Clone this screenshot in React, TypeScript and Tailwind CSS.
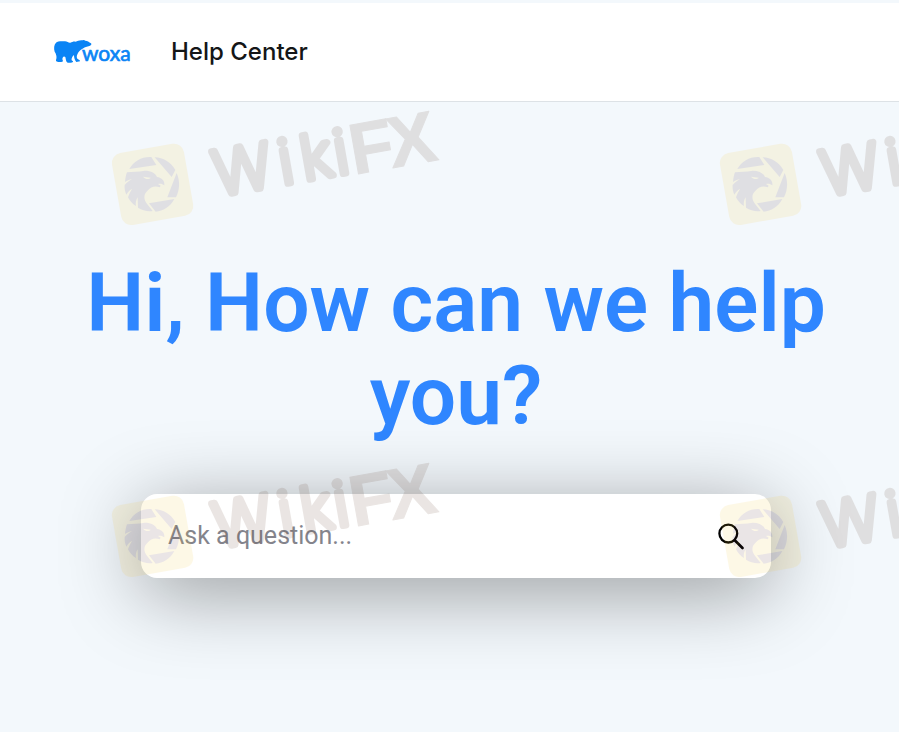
import React from "react";

function WoxaLogo() {
  return (
    <svg viewBox="0 0 285 135" className="h-[45px] w-[95px]" role="img" aria-label="woxa">
      <path
        fill="#0a84f5"
        d="M33 38 C38 33 50 33 60 34 C67 35 71 39 76 38 C82 36 86 33 92 35 C97 33 104 30 112 31 L117 30 L121 32 C127 32 132 36 138 40 C141 43 138 47 133 48 C126 50 119 51 115 55 C108 59 103 63 99 69 C95 76 94 81 97 86 C102 89 106 91 105 94 L94 96 C89 90 87 83 87 75 C81 80 79 86 80 91 C86 94 86 98 78 98 L68 98 C62 95 63 88 61 81 C58 78 55 79 53 83 C51 87 53 90 54 93 C53 97 46 96 40 96 C32 95 32 91 34 87 C36 79 33 71 29 65 C26 55 27 44 33 38 Z"
      />
      <text
        x="111"
        y="93"
        fill="#0a84f5"
        stroke="#0a84f5"
        strokeWidth="2"
        fontFamily="Lato, 'Liberation Sans', sans-serif"
        fontWeight="400"
        fontSize="63"
      >
        woxa
      </text>
    </svg>
  );
}

function Watermark({ x, y }: { x: number; y: number }) {
  return (
    <g transform={`translate(${x} ${y})`} opacity="0.12">
      <g transform="translate(152 184) rotate(-10)">
        <rect x="-36" y="-36" width="73" height="73" rx="10" fill="#f4c83a" />
      </g>
      <g transform="translate(105 138) scale(0.3333)">
        <path
          fill="#5a3438"
          d="M73 93 C86 69 112 55 139 57 L154 81 Z M149 58 C175 59 197 72 211 96 L200 117 Z M215 105 C226 130 224 156 213 178 L187 178 Z M132 196 L208 183 C196 207 174 219 152 221 Z"
        />
        <path
          fill="#5a3438"
          d="M66 103 C82 100 99 103 119 98 C139 98 152 106 156 117 C170 119 180 128 178 142 C173 137 165 136 159 138 L167 143 L164 148 C150 142 137 147 129 157 C114 170 116 185 127 199 L143 219 C129 222 112 217 99 209 L98 178 C93 186 91 195 93 204 C82 198 74 188 69 178 C72 169 76 161 81 153 C73 157 68 163 64 170 C60 161 58 151 59 141 C65 134 73 128 81 124 C73 125 66 128 60 132 C61 121 63 111 66 103 Z"
        />
        <path d="M114 116 L137 119 C131 126 121 124 114 116 Z" fill="#f4c83a" />
      </g>
      <g transform="translate(216 199) rotate(-10)" fill="#5a3420" stroke="#5a3420" strokeLinejoin="round">
        <text
          x="31 75 106 131"
          y="-3"
          textAnchor="middle"
          fontFamily="Inter, 'Liberation Sans', sans-serif"
          fontWeight="200"
          fontSize="61"
          strokeWidth="7"
        >
          Wiki
        </text>
        <text
          x="140 179"
          y="0"
          fontFamily="'Liberation Sans', Arial, sans-serif"
          fontWeight="700"
          fontSize="72"
          strokeWidth="1"
        >
          FX
        </text>
      </g>
    </g>
  );
}

function WatermarkLayer() {
  return (
    <svg className="pointer-events-none absolute inset-0 h-full w-full" aria-hidden="true">
      <Watermark x={0} y={0} />
      <Watermark x={608} y={0} />
      <Watermark x={0} y={352} />
      <Watermark x={608} y={352} />
    </svg>
  );
}

function SearchIcon() {
  return (
    <svg viewBox="0 0 28 28" className="size-7" fill="none" stroke="#000" strokeWidth="2.3" strokeLinecap="round">
      <circle cx="11.3" cy="11.6" r="8.9" />
      <path d="M18 18.5 L25.5 26" strokeWidth="2.7" />
    </svg>
  );
}

export default function App() {
  return (
    <div className="relative overflow-hidden bg-white pb-3 font-[Roboto,'Liberation_Sans',sans-serif]">
      <header className="flex h-[102px] items-center gap-[31px] border-t-[3px] border-b border-t-[#f3f8fc] border-b-[#dde2e6] bg-white pl-[45px]">
        <a href="#home">
          <WoxaLogo />
        </a>
        <a href="#help" className="font-[Inter,'Liberation_Sans',sans-serif] text-2xl font-medium text-[#141617]">
          Help Center
        </a>
      </header>
      <main className="flex h-[630px] flex-col items-center bg-[#f3f8fc] pt-[155px] pl-[13px]">
        <h1 className="max-w-[800px] text-center text-[82px] leading-[93px] font-semibold text-[#2f86ff]">
          Hi, How can we help you?
        </h1>
        <form
          className="mt-[51px] flex h-[84px] w-[630px] max-w-full items-center rounded-2xl bg-white pr-[26px] pl-[27px] shadow-[0_14px_80px_rgba(0,0,0,0.38)]"
          onSubmit={(e) => e.preventDefault()}
        >
          <input
            type="text"
            aria-label="Ask a question"
            placeholder="Ask a question..."
            className="min-w-0 flex-1 text-[25px] text-[#141617] outline-none placeholder:text-[#84848c]"
          />
          <button type="submit" aria-label="Search">
            <SearchIcon />
          </button>
        </form>
      </main>
      <WatermarkLayer />
    </div>
  );
}
